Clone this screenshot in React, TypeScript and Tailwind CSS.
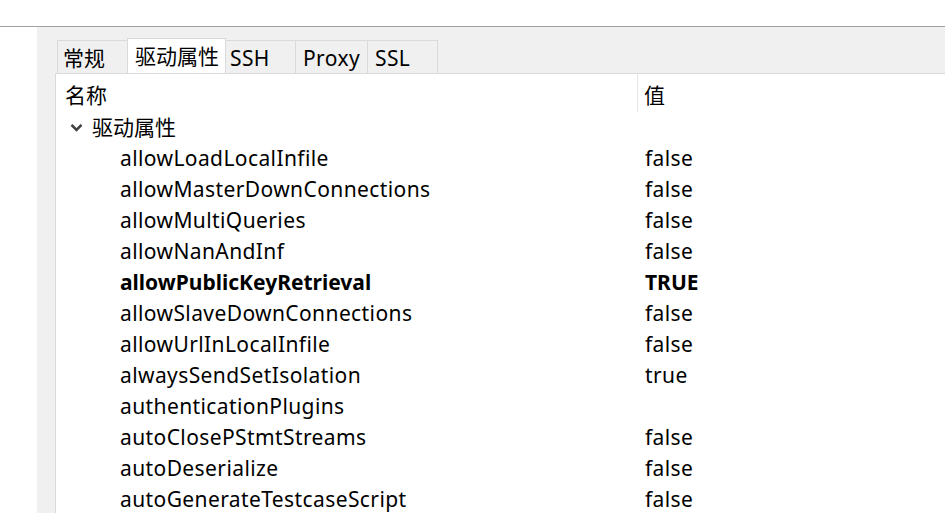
import React from "react";

const rows: { name: string; value: string; bold?: boolean }[] = [
  { name: "allowLoadLocalInfile", value: "false" },
  { name: "allowMasterDownConnections", value: "false" },
  { name: "allowMultiQueries", value: "false" },
  { name: "allowNanAndInf", value: "false" },
  { name: "allowPublicKeyRetrieval", value: "TRUE", bold: true },
  { name: "allowSlaveDownConnections", value: "false" },
  { name: "allowUrlInLocalInfile", value: "false" },
  { name: "alwaysSendSetIsolation", value: "true" },
  { name: "authenticationPlugins", value: "" },
  { name: "autoClosePStmtStreams", value: "false" },
  { name: "autoDeserialize", value: "false" },
  { name: "autoGenerateTestcaseScript", value: "false" },
];

const font = { fontFamily: '"Noto Sans", "Noto Sans CJK SC", sans-serif' };

export default function App() {
  return (
    <div
      className="w-[945px] h-[513px] bg-white overflow-hidden flex flex-col text-[21px] text-black"
      style={font}
    >
      <div className="h-[27px] shrink-0 bg-white border-b border-[#a0a0a0]" />
      <div className="flex flex-1 min-h-0">
        <div className="w-[37px] shrink-0 bg-white" />
        <div className="flex-1 bg-[#f0f0f0] pl-[18px] pt-[11px] flex flex-col min-h-0">
          <div className="flex items-end h-[35px] pl-[2px] leading-none">
            <div className="w-[70px] h-[33px] bg-[#f0f0f0] border-t border-l border-[#dadada] pl-[5px] pt-[2px] flex items-center">常规</div>
            <div className="w-[99px] h-[35px] bg-white border-t border-x border-[#dadada] pl-[7px] flex items-center">驱动属性</div>
            <div className="w-[70px] h-[33px] bg-[#f0f0f0] border-t border-r border-[#dadada] pl-[4px] pt-[2px] flex items-center tracking-[0.4px]">SSH</div>
            <div className="w-[72px] h-[33px] bg-[#f0f0f0] border-t border-r border-[#dadada] pl-[7px] pt-[2px] flex items-center tracking-[0.4px]">Proxy</div>
            <div className="w-[70px] h-[33px] bg-[#f0f0f0] border-t border-r border-[#dadada] pl-[7px] pt-[2px] flex items-center tracking-[0.4px]">SSL</div>
          </div>
          <div className="flex-1 bg-white border-t border-l border-[#dadada] min-h-0">
            <div className="flex h-[38px] leading-none">
              <div className="w-[582px] pl-[9px] pt-[11px] border-r border-[#e5e5e5]">名称</div>
              <div className="pl-[6px] pt-[11px]">值</div>
            </div>
            <div className="flex items-center h-[31px] pl-[14px] leading-none">
              <svg width="13" height="9" viewBox="0 0 13 9" className="mr-[9px]">
                <path d="M1.5 1.8 L6.5 6.8 L11.5 1.8" fill="none" stroke="#404040" strokeWidth="2.6" />
              </svg>
              <span>驱动属性</span>
            </div>
            {rows.map((r) => (
              <div
                key={r.name}
                className={`flex items-center h-[31px] leading-none ${r.bold ? "font-bold" : "tracking-[0.4px]"}`}
              >
                <div className="w-[589px] pl-[64px] whitespace-nowrap">{r.name}</div>
                <div>{r.value}</div>
              </div>
            ))}
          </div>
        </div>
      </div>
    </div>
  );
}
